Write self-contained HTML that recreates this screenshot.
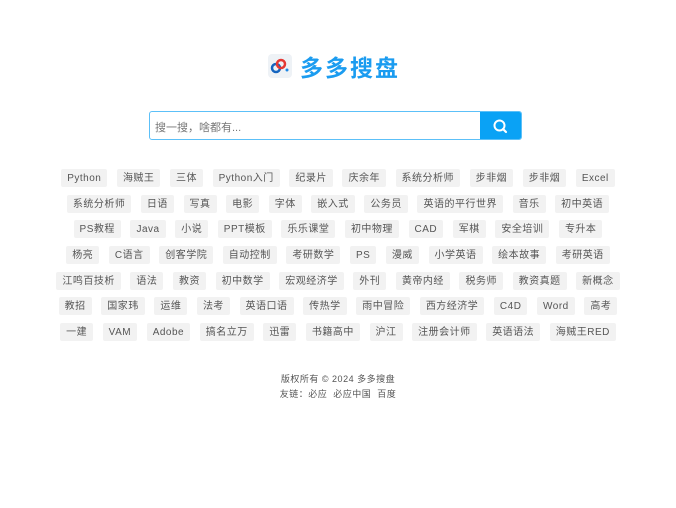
<!DOCTYPE html>
<html><head><meta charset="utf-8"><style>
body{margin:0;background:#fff;font-family:"Liberation Sans","Noto Sans CJK SC",sans-serif;width:676px;height:508px;overflow:hidden}
.logo{position:absolute;left:268px;top:49px;display:flex;align-items:center}
.ic{width:24px;height:24px;background:#eef2f6;border-radius:4px;position:relative}
.t{margin-left:8px;font-size:23px;font-weight:bold;color:#1b9cf0;letter-spacing:2px;font-family:"Noto Sans CJK SC",sans-serif}
.search{position:absolute;left:149px;top:111px;width:373px;height:29px;border:1px solid #5cc0f8;border-radius:3px;box-sizing:border-box;overflow:hidden}
.search span{position:absolute;left:5px;top:7px;font-size:11px;color:#777}
.btn{position:absolute;right:0;top:0;width:41px;height:29px;background:#0aa2f5}
.tags{position:absolute;left:40px;top:169px;width:596px}
.row{display:flex;justify-content:center;height:25.7px}
.row span{background:#f2f2f2;color:#555;font-size:10px;letter-spacing:.5px;height:18px;line-height:19px;padding:0 6px;margin:0 4.8px;border-radius:2px;white-space:nowrap}
.ft{position:absolute;top:372px;left:0;width:676px;text-align:center;font-size:9px;color:#555;line-height:15px;letter-spacing:.5px}
</style></head><body>
<div class="logo"><div class="ic"><svg width="24" height="24" viewBox="0 0 24 24"><circle cx="8" cy="14" r="4" fill="none" stroke="#1565c0" stroke-width="2.5"/><circle cx="13" cy="10" r="4" fill="none" stroke="#e53935" stroke-width="2.5"/><circle cx="19" cy="16" r="1.5" fill="#1e88e5"/></svg></div><div class="t">多多搜盘</div></div>
<div class="search"><span>搜一搜，啥都有...</span><div class="btn"><svg width="41" height="29" viewBox="0 0 41 29"><circle cx="19.5" cy="13.5" r="5" fill="none" stroke="#fff" stroke-width="2"/><line x1="23" y1="17" x2="26" y2="20" stroke="#fff" stroke-width="2.2" stroke-linecap="round"/></svg></div></div>
<div class="tags">
<div class="row"><span>Python</span><span>海贼王</span><span>三体</span><span>Python入门</span><span>纪录片</span><span>庆余年</span><span>系统分析师</span><span>步非烟</span><span>步非烟</span><span>Excel</span></div>
<div class="row"><span>系统分析师</span><span>日语</span><span>写真</span><span>电影</span><span>字体</span><span>嵌入式</span><span>公务员</span><span>英语的平行世界</span><span>音乐</span><span>初中英语</span></div>
<div class="row"><span>PS教程</span><span>Java</span><span>小说</span><span>PPT模板</span><span>乐乐课堂</span><span>初中物理</span><span>CAD</span><span>军棋</span><span>安全培训</span><span>专升本</span></div>
<div class="row"><span>杨亮</span><span>C语言</span><span>创客学院</span><span>自动控制</span><span>考研数学</span><span>PS</span><span>漫威</span><span>小学英语</span><span>绘本故事</span><span>考研英语</span></div>
<div class="row"><span>江鸣百技析</span><span>语法</span><span>教资</span><span>初中数学</span><span>宏观经济学</span><span>外刊</span><span>黄帝内经</span><span>税务师</span><span>教资真题</span><span>新概念</span></div>
<div class="row"><span>教招</span><span>国家玮</span><span>运维</span><span>法考</span><span>英语口语</span><span>传热学</span><span>雨中冒险</span><span>西方经济学</span><span>C4D</span><span>Word</span><span>高考</span></div>
<div class="row"><span>一建</span><span>VAM</span><span>Adobe</span><span>搞名立万</span><span>迅雷</span><span>书籍高中</span><span>沪江</span><span>注册会计师</span><span>英语语法</span><span>海贼王RED</span></div>
</div>
<div class="ft">版权所有 © 2024 多多搜盘<br>友链：必应 &nbsp;必应中国 &nbsp;百度</div>
</body></html>
